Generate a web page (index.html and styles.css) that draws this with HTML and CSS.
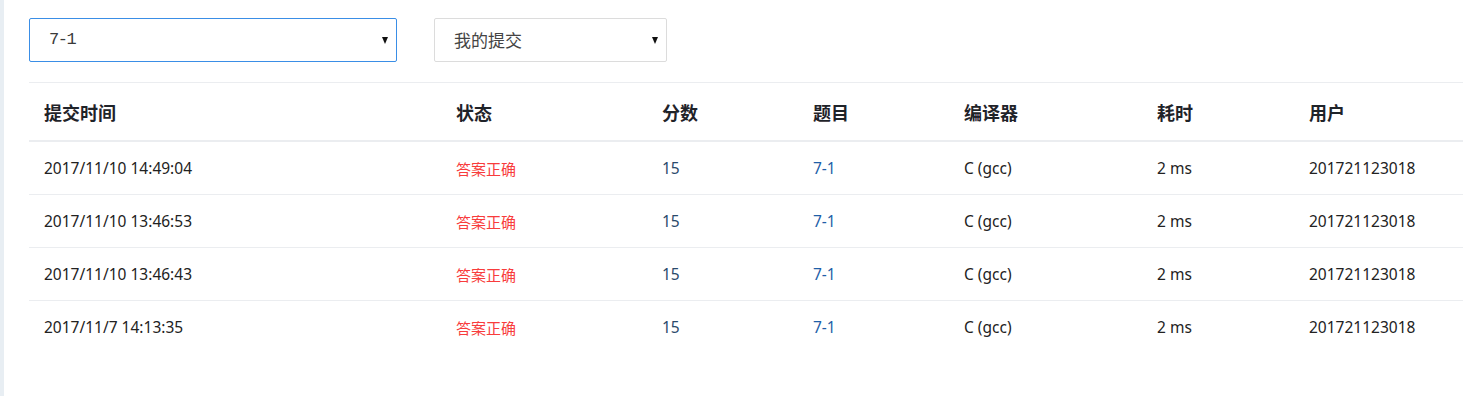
FILE: index.html
```html
<!DOCTYPE html>
<html lang="zh">
<head>
<meta charset="utf-8">
<link rel="stylesheet" href="styles.css">
</head>
<body>
<div class="page">
  <div class="strip"></div>
  <main class="content">
    <div class="filters">
      <div class="select select-active select-problem"><span class="select-value select-code">7-1</span><span class="arrow"></span></div>
      <div class="select select-scope"><span class="select-value">我的提交</span><span class="arrow"></span></div>
    </div>
    <table class="table">
      <colgroup>
        <col style="width:412px"><col style="width:206px"><col style="width:151px"><col style="width:151px"><col style="width:193px"><col style="width:152px"><col>
      </colgroup>
      <thead>
        <tr><th>提交时间</th><th>状态</th><th>分数</th><th>题目</th><th>编译器</th><th>耗时</th><th>用户</th></tr>
      </thead>
      <tbody>
        <tr><td>2017/11/10 14:49:04</td><td class="status">答案正确</td><td class="score">15</td><td class="problem">7-1</td><td>C (gcc)</td><td>2 ms</td><td>201721123018</td></tr>
        <tr><td>2017/11/10 13:46:53</td><td class="status">答案正确</td><td class="score">15</td><td class="problem">7-1</td><td>C (gcc)</td><td>2 ms</td><td>201721123018</td></tr>
        <tr><td>2017/11/10 13:46:43</td><td class="status">答案正确</td><td class="score">15</td><td class="problem">7-1</td><td>C (gcc)</td><td>2 ms</td><td>201721123018</td></tr>
        <tr><td>2017/11/7 14:13:35</td><td class="status">答案正确</td><td class="score">15</td><td class="problem">7-1</td><td>C (gcc)</td><td>2 ms</td><td>201721123018</td></tr>
      </tbody>
    </table>
  </main>
</div>
</body>
</html>
```
FILE: styles.css
```css
html, body {
  margin: 0;
  padding: 0;
  background: #fff;
}
body {
  font-family: "Noto Sans", "Noto Sans CJK SC", sans-serif;
  color: #1f2329;
}
.page {
  display: flex;
  min-height: 396px;
}
.strip {
  width: 4px;
  flex: none;
  background: #e8eef3;
}
.content {
  flex: 1;
  padding: 18px 0 0 25px;
  min-width: 0;
}
.filters {
  display: flex;
  gap: 37px;
  height: 44px;
}
.select {
  box-sizing: border-box;
  height: 44px;
  display: flex;
  align-items: center;
  justify-content: space-between;
  border: 1px solid #dcdcdc;
  border-radius: 2px;
  padding: 0 8px 2px 19px;
  background: #fff;
  font-family: "Noto Sans CJK SC", sans-serif;
  font-size: 17px;
  color: #444;
}
.select-active {
  border-color: #3a8ee6;
}
.select-problem { width: 368px; }
.select-scope { width: 233px; }
.select-value { font-weight: 400; }
.select-code {
  font-family: "Liberation Mono", monospace;
  font-size: 17px;
  letter-spacing: -1.5px;
  color: #3a3a3a;
}
.arrow {
  width: 0;
  height: 0;
  border-left: 3.5px solid transparent;
  border-right: 3.5px solid transparent;
  border-top: 7px solid #111;
  margin-top: 2px;
}
.table {
  margin-top: 20px;
  width: 100%;
  border-collapse: collapse;
  table-layout: fixed;
  border-top: 1px solid #ebedf0;
}
.table th {
  text-align: left;
  font-weight: 700;
  font-size: 18px;
  color: #1f2329;
  height: 57px;
  padding: 0 15px;
  border-bottom: 2px solid #ebedf0;
  font-family: "Noto Sans CJK SC", sans-serif;
}
.table td {
  height: 52px;
  padding: 0 15px;
  font-size: 15.5px;
  color: #222;
  border-bottom: 1px solid #ebedf0;
}
.table tbody tr:last-child td {
  border-bottom: none;
}
.table td.status {
  color: #f83c3c;
  font-size: 15px;
  font-family: "Noto Sans CJK SC", sans-serif;
}
.table td.score { color: #2a4a6b; }
.table td.problem { color: #1f5fa8; }
```
